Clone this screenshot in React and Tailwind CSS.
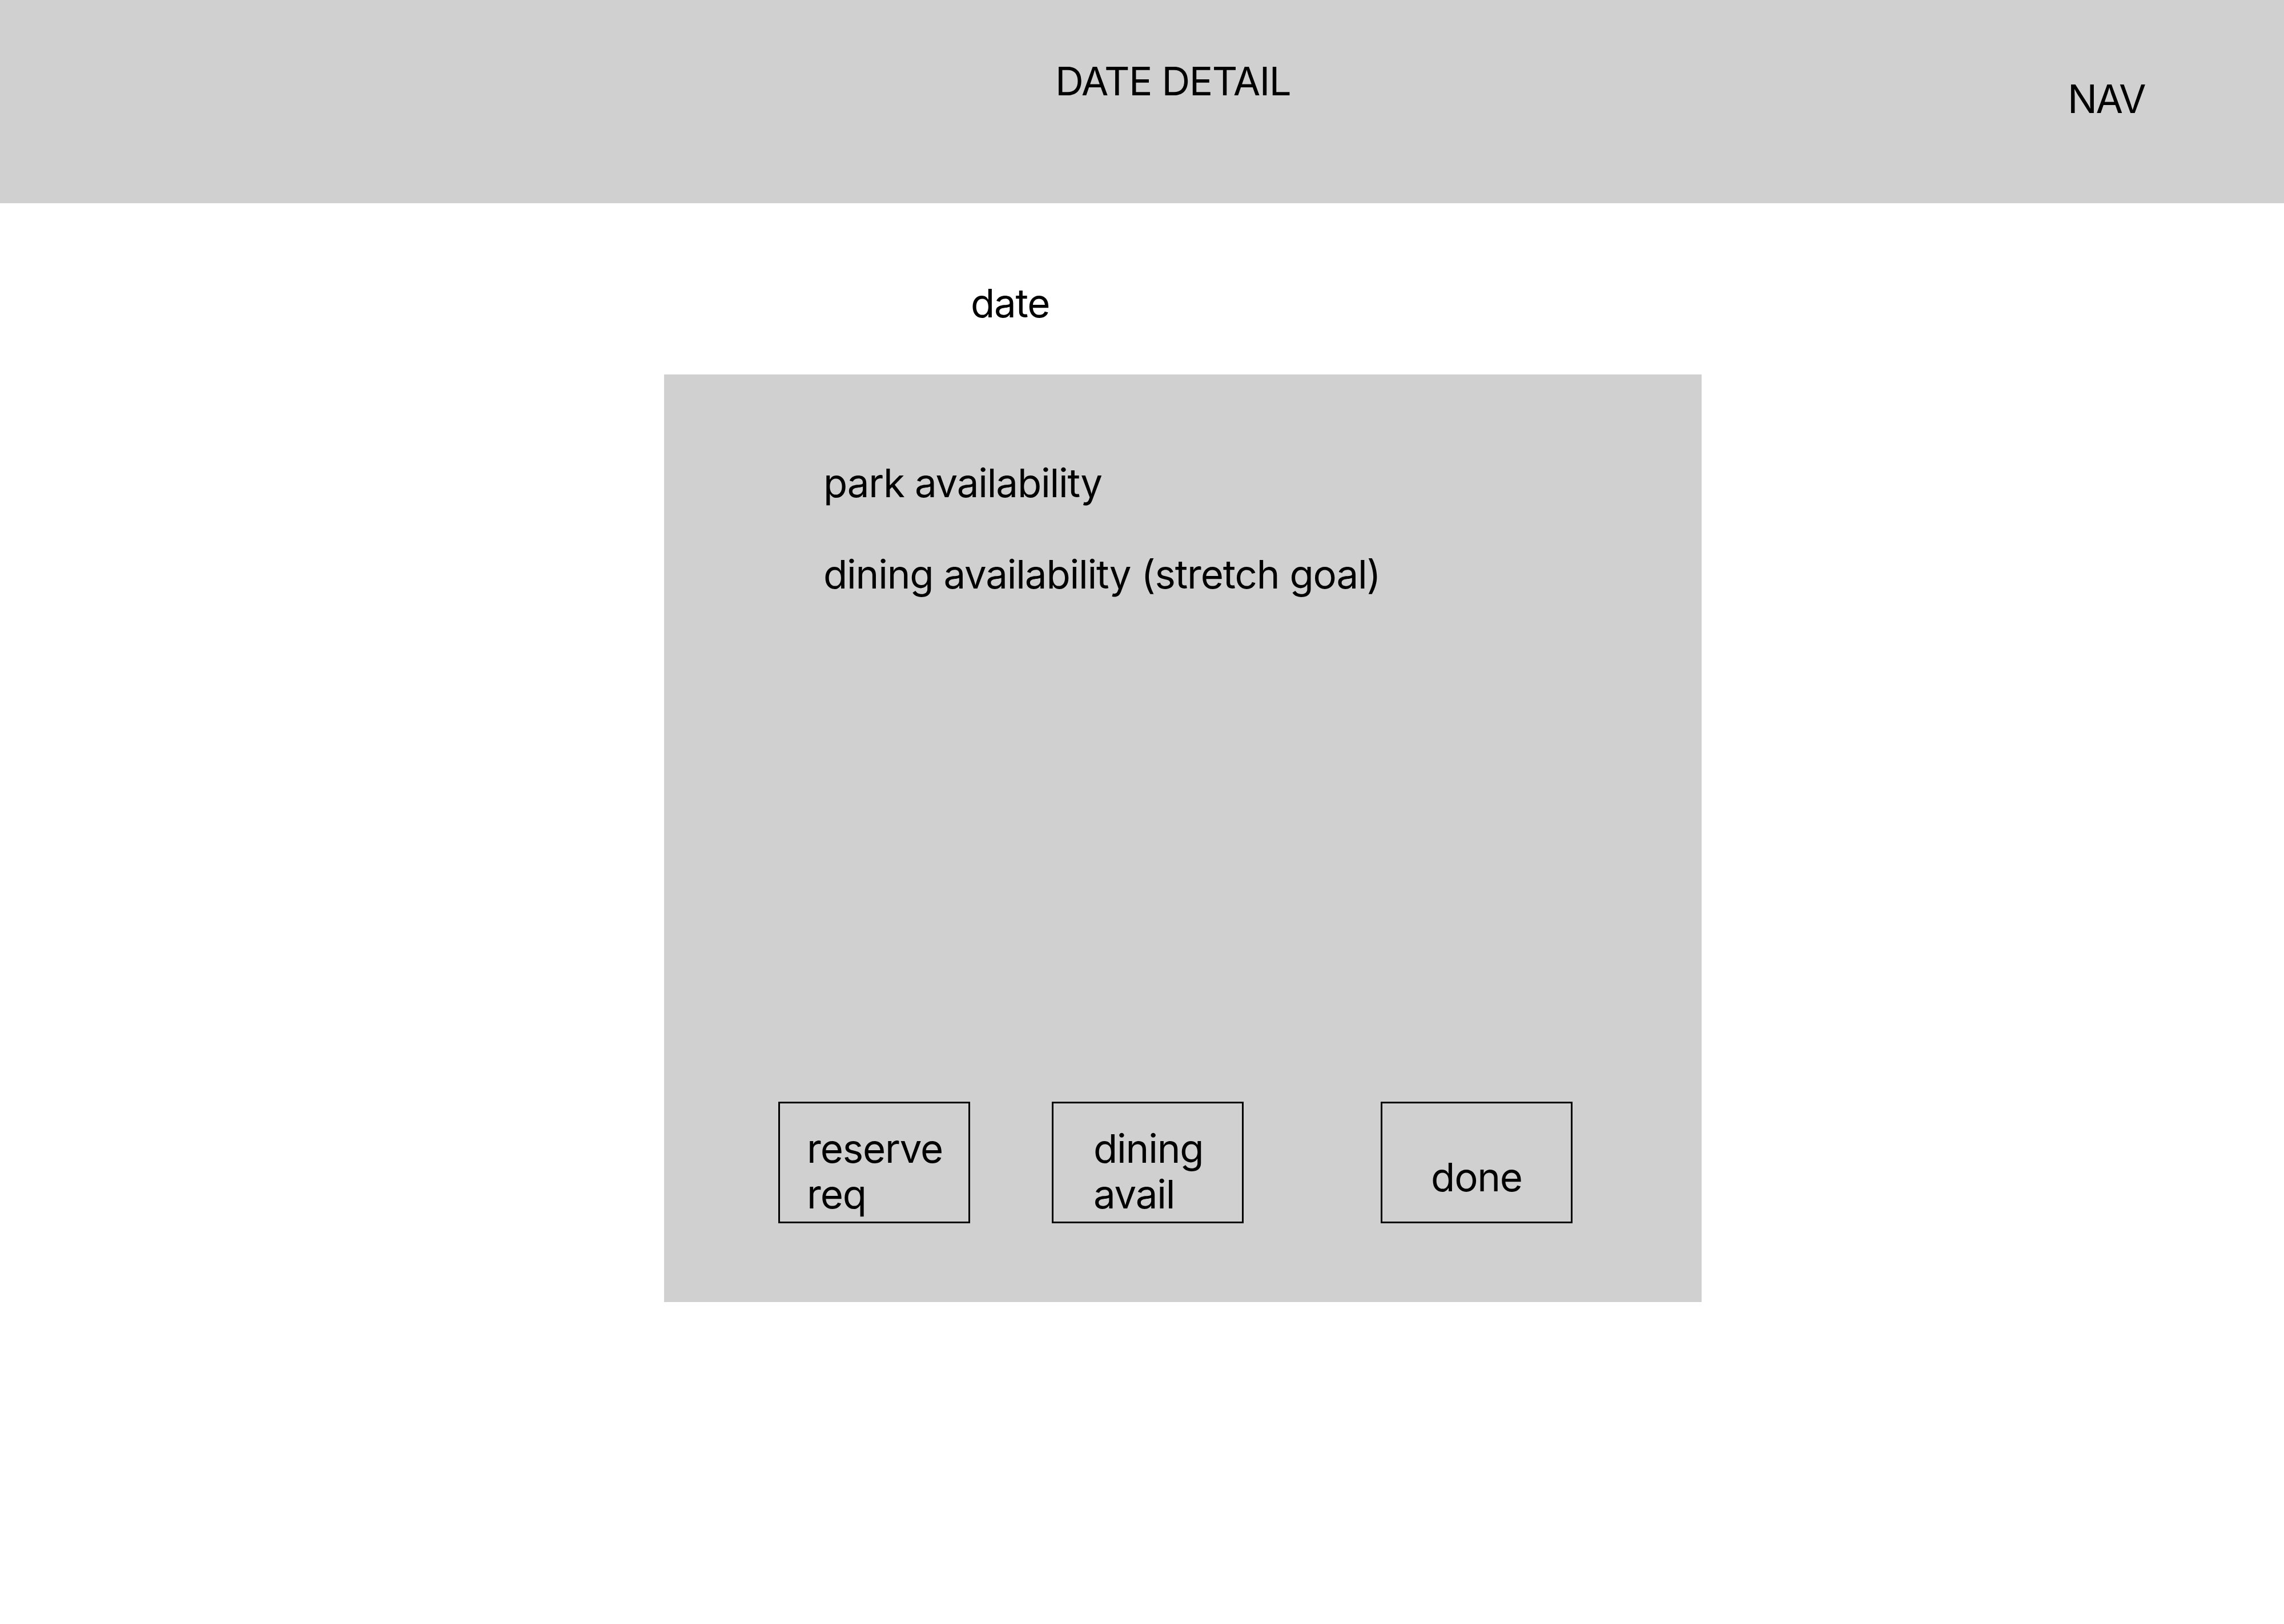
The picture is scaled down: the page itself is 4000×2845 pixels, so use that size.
export default function App() {
  const font = { fontFamily: "Inter, 'Liberation Sans', sans-serif" };
  return (
    <div className="w-[4000px] h-[2845px] bg-white text-black text-[69px] leading-[80px] tracking-[-1.2px]" style={font}>
      <header className="flex h-[356px] bg-[#d0d0d0]">
        <div className="w-[3621px] pl-[1848px] pt-[102px]">
          <span className="tracking-[-1.6px]">DATE DETAIL</span>
        </div>
        <div className="pt-[133px]">
          <span className="tracking-[-2.5px]">NAV</span>
        </div>
      </header>
      <div className="pl-[1700px] pt-[135px]">date</div>
      <div className="ml-[1163px] mt-[85px] w-[1817px] h-[1625px] bg-[#d0d0d0] flex flex-col">
        <div className="pl-[279px] pt-[150px] flex flex-col gap-[80px]">
          <div>park availability</div>
          <div>dining availability (stretch goal)</div>
        </div>
        <div className="flex pl-[200px] mt-[884px]">
          <div className="w-[336px] h-[213px] border-[3px] border-black pl-[47px] pt-[39px]">
            <div>reserve</div>
            <div>req</div>
          </div>
          <div className="ml-[143px] w-[336px] h-[213px] border-[3px] border-black pl-[70px] pt-[39px]">
            <div>dining</div>
            <div>avail</div>
          </div>
          <div className="ml-[240px] w-[336px] h-[213px] border-[3px] border-black pt-[89px] text-center">
            <div>done</div>
          </div>
        </div>
      </div>
    </div>
  );
}
